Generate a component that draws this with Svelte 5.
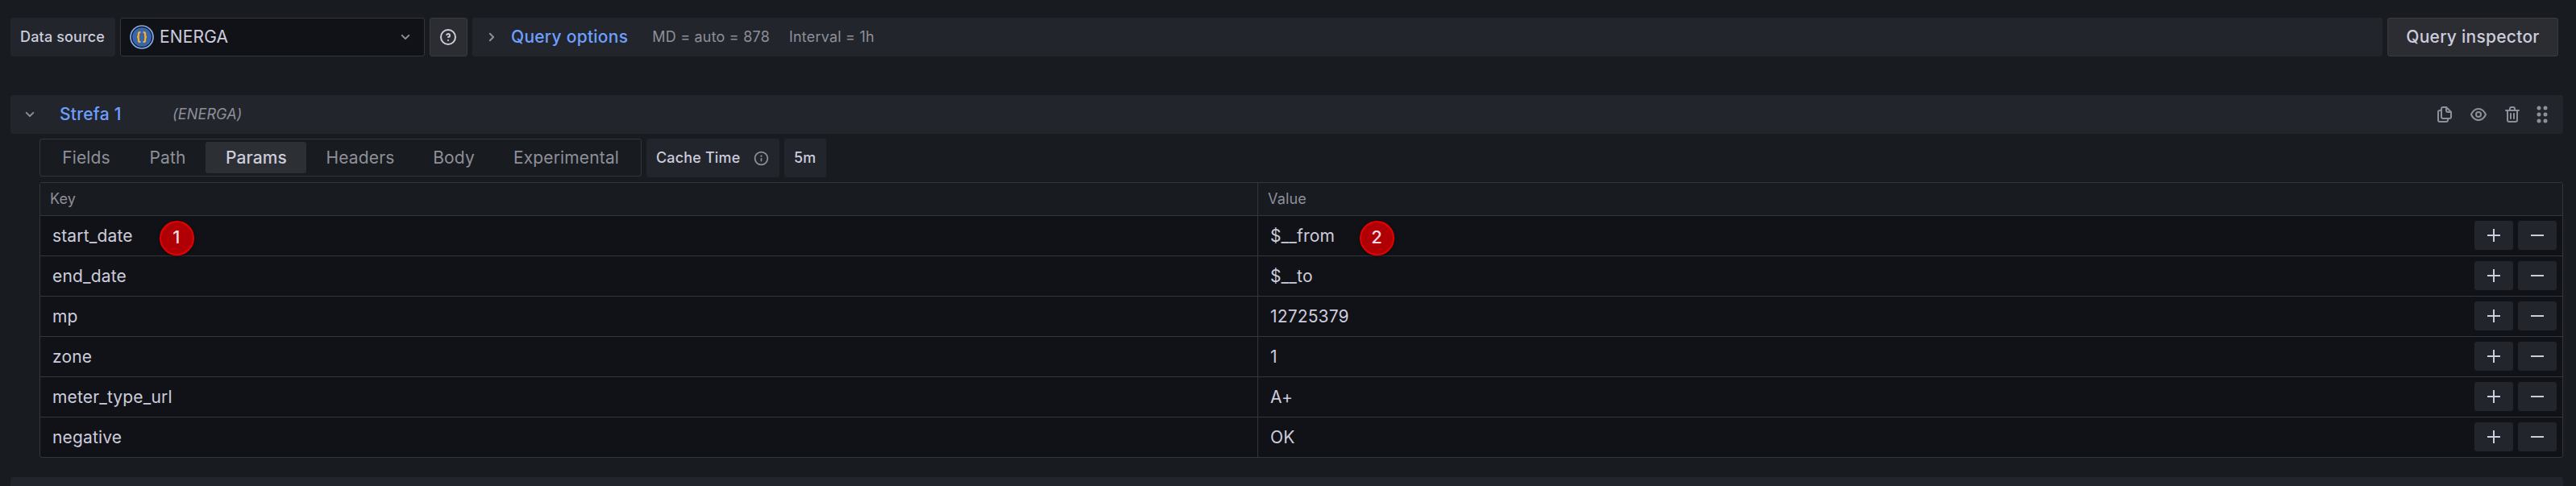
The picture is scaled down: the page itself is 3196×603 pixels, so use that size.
<script>
  const tabs = ['Fields', 'Path', 'Params', 'Headers', 'Body', 'Experimental'];
  const rows = [
    { key: 'start_date', value: '$__from', badge: 1 },
    { key: 'end_date', value: '$__to' },
    { key: 'mp', value: '12725379' },
    { key: 'zone', value: '1' },
    { key: 'meter_type_url', value: 'A+' },
    { key: 'negative', value: 'OK' }
  ];
  const icons = {
    down: 'M17,9.17a1,1,0,0,0-1.41,0L12,12.71,8.46,9.17a1,1,0,0,0-1.41,0,1,1,0,0,0,0,1.42l4.24,4.24a1,1,0,0,0,1.42,0L17,10.59A1,1,0,0,0,17,9.17Z',
    right: 'M14.83,11.29,10.59,7.05a1,1,0,0,0-1.42,0,1,1,0,0,0,0,1.41L12.71,12,9.17,15.54a1,1,0,0,0,0,1.41,1,1,0,0,0,.71.29,1,1,0,0,0,.71-.29l4.24-4.24A1,1,0,0,0,14.83,11.29Z',
    help: 'M11.29,15.29a1.58,1.58,0,0,0-.12.15.76.76,0,0,0-.09.18.64.64,0,0,0-.06.18,1.36,1.36,0,0,0,0,.2.84.84,0,0,0,.08.38.9.9,0,0,0,.54.54.94.94,0,0,0,.76,0,.9.9,0,0,0,.54-.54A1,1,0,0,0,13,16a1,1,0,0,0-.29-.71A1,1,0,0,0,11.29,15.29ZM12,2A10,10,0,1,0,22,12,10,10,0,0,0,12,2Zm0,18a8,8,0,1,1,8-8A8,8,0,0,1,12,20ZM12,7A3,3,0,0,0,9.4,8.5a1,1,0,1,0,1.73,1A1,1,0,0,1,12,9a1,1,0,0,1,0,2,1,1,0,1,0,0,2,3,3,0,0,0,0-6Z',
    info: 'M12,2A10,10,0,1,0,22,12,10.01114,10.01114,0,0,0,12,2Zm0,18a8,8,0,1,1,8-8A8.00917,8.00917,0,0,1,12,20Zm0-8.5a1,1,0,0,0-1,1v3a1,1,0,0,0,2,0v-3A1,1,0,0,0,12,11.5Zm0-4a1.25,1.25,0,1,0,1.25,1.25A1.25,1.25,0,0,0,12,7.5Z',
    copy: 'M21,8.94a1.31,1.31,0,0,0-.06-.27l0-.09a1.07,1.07,0,0,0-.19-.28h0l-6-6h0a1.07,1.07,0,0,0-.28-.19.32.32,0,0,0-.09,0A.88.88,0,0,0,14.05,2H10A3,3,0,0,0,7,5V6H6A3,3,0,0,0,3,9V19a3,3,0,0,0,3,3h8a3,3,0,0,0,3-3V18h1a3,3,0,0,0,3-3V9S21,9,21,8.94ZM15,5.41,17.59,8H16a1,1,0,0,1-1-1ZM15,19a1,1,0,0,1-1,1H6a1,1,0,0,1-1-1V9A1,1,0,0,1,6,8H7v7a3,3,0,0,0,3,3h5Zm4-4a1,1,0,0,1-1,1H10a1,1,0,0,1-1-1V5a1,1,0,0,1,1-1h3V7a3,3,0,0,0,3,3h3Z',
    eye: 'M21.92,11.6C19.9,6.91,16.1,4,12,4S4.1,6.91,2.08,11.6a1,1,0,0,0,0,.8C4.1,17.09,7.9,20,12,20s7.9-2.91,9.92-7.6A1,1,0,0,0,21.92,11.6ZM12,18c-3.17,0-6.17-2.29-7.9-6C5.83,8.29,8.83,6,12,6s6.17,2.29,7.9,6C18.17,15.71,15.17,18,12,18ZM12,8a4,4,0,1,0,4,4A4,4,0,0,0,12,8Zm0,6a2,2,0,1,1,2-2A2,2,0,0,1,12,14Z',
    trash: 'M10,18a1,1,0,0,0,1-1V11a1,1,0,0,0-2,0v6A1,1,0,0,0,10,18ZM20,6H16V5a3,3,0,0,0-3-3H11A3,3,0,0,0,8,5V6H4A1,1,0,0,0,4,8H5V19a3,3,0,0,0,3,3h8a3,3,0,0,0,3-3V8h1a1,1,0,0,0,0-2ZM10,5a1,1,0,0,1,1-1h2a1,1,0,0,1,1,1V6H10Zm7,14a1,1,0,0,1-1,1H8a1,1,0,0,1-1-1V8H17Zm-3-1a1,1,0,0,0,1-1V11a1,1,0,0,0-2,0v6A1,1,0,0,0,14,18Z'
  };
</script>

{#snippet icon(name, size)}
  <svg width={size} height={size} viewBox="0 0 24 24" fill="currentColor"><path d={icons[name]} /></svg>
{/snippet}

<div class="editor">
  <div class="toolbar">
    <div class="label ds">Data source</div>
    <div class="select">
      <svg class="logo" width="30" height="30" viewBox="0 0 30 30" fill="none">
        <circle cx="15" cy="15" r="14" stroke="#82aef0" stroke-width="1.7" />
        <circle cx="15" cy="15" r="12" fill="#3865ab" />
        <g stroke="#fbb021" stroke-width="2.2">
          <path d="M13.4 9.1h-.8q-1.7 0-1.7 1.7v2.1q0 2.1-1.9 2.1 1.9 0 1.9 2.1v2.1q0 1.7 1.7 1.7h.8" />
          <path d="M16.6 9.1h.8q1.7 0 1.7 1.7v2.1q0 2.1 1.9 2.1-1.9 0-1.9 2.1v2.1q0 1.7-1.7 1.7h-.8" />
        </g>
      </svg>
      <span>ENERGA</span>
      <i class="muted">{@render icon('down', 24)}</i>
    </div>
    <div class="help">{@render icon('help', 24)}</div>
    <div class="options">
      <i class="muted">{@render icon('right', 24)}</i>
      <span class="link">Query options</span>
      <span class="small md">MD = auto = 878</span>
      <span class="small">Interval = 1h</span>
    </div>
    <div class="inspector">Query inspector</div>
  </div>

  <div class="query-head">
    <i class="muted">{@render icon('down', 24)}</i>
    <span class="link name">Strefa 1</span>
    <em>(ENERGA)</em>
    <div class="actions">
      {@render icon('copy', 24)}
      {@render icon('eye', 24)}
      {@render icon('trash', 24)}
      <svg width="24" height="24" viewBox="0 0 24 24" fill="currentColor">
        {#each [4, 12, 20] as y}
          <circle cx="8" cy={y} r="2.5" /><circle cx="16" cy={y} r="2.5" />
        {/each}
      </svg>
    </div>
  </div>

  <div class="body">
    <div class="controls">
      <div class="tabs">
        {#each tabs as tab}
          <div class="tab" class:active={tab === 'Params'}>{tab}</div>
        {/each}
      </div>
      <div class="label cache">Cache Time <i class="muted">{@render icon('info', 21)}</i></div>
      <div class="label ttl">5m</div>
    </div>

    <div class="table">
      <div class="row header"><div class="cell">Key</div><div class="cell">Value</div></div>
      {#each rows as row}
        <div class="row">
          <div class="cell">{row.key}{#if row.badge}<b class="badge one">1</b>{/if}</div>
          <div class="cell">
            {row.value}{#if row.badge}<b class="badge two">2</b>{/if}
            <div class="buttons">
              <div class="btn"><svg width="16" height="16" stroke="#ccccdc" stroke-width="2"><path d="M8 0v16M0 8h16" /></svg></div>
              <div class="btn"><svg width="16" height="16" stroke="#ccccdc" stroke-width="2"><path d="M0 8h16" /></svg></div>
            </div>
          </div>
        </div>
      {/each}
    </div>
  </div>
  <div class="next"></div>
</div>

<style>
  :global(body) { background: #181b1f; }
  .editor {
    box-sizing: border-box; height: 603px; overflow: hidden; padding: 22px 16px 0 13px;
    font: 400 21px/32px Inter, sans-serif; letter-spacing: 0.15px; color: #ccccdc; background: #181b1f;
  }
  .editor * { box-sizing: border-box; }
  svg { display: block; flex: none; }
  i { display: flex; }
  .muted { color: #8e8f9a; }
  .link { color: #6e9fff; font-weight: 500; letter-spacing: 0.25px; }
  .toolbar { display: flex; gap: 6px; height: 48px; padding-right: 6px; }
  .toolbar > div, .controls > div, .query-head { display: flex; align-items: center; border-radius: 3px; white-space: nowrap; flex: none; }
  .label { height: 48px; padding: 0 12px; background: #22252b; font-size: 18px; font-weight: 500; }
  .ds { width: 130px; }
  .toolbar .select { width: 378px; padding: 0 11px; background: #111217; border: 1px solid #35363c; }
  .select span { flex: 1; margin-left: 7px; }
  .toolbar .help { width: 47px; padding-left: 10px; background: #2c2d32; border: 1px solid #3a3b41; }
  .toolbar .options { flex: 1; background: #22252b; padding-left: 12px; }
  .options .link { margin-left: 12px; }
  .small { font-size: 18px; color: #8e8f9a; margin-left: 24px; letter-spacing: 0.2px; }
  .small.md { margin-left: 30px; }
  .toolbar .inspector { width: 212px; justify-content: center; background: #2c2d32; border: 1px solid #3a3b41; font-weight: 500; letter-spacing: 0.25px; }
  .query-head { height: 48px; margin-top: 48px; background: #22252b; padding: 0 14px 0 12px; }
  .name { margin-left: 25px; width: 77px; white-space: nowrap; }
  em { margin-left: 63px; font-size: 18px; color: #8e8f9a; }
  .actions { margin-left: auto; display: flex; gap: 18px; color: #8e8f9a; }
  .actions svg:last-child { margin-left: -5px; }
  .body { padding: 6px 0 0 36px; }
  .controls { display: flex; gap: 6px; height: 48px; }
  .controls .tabs { display: grid; grid-template-columns: 107px 95px 125px 133px 99px 1fr; width: 747px; height: 47px; border: 1px solid #35363c; padding: 0 3px; }
  .tab { height: 39px; line-height: 39px; text-align: center; padding-left: 1px; color: #8e8f9a; border-radius: 3px; }
  .tab.active { background: #2c2f34; color: #ccccdc; font-weight: 500; }
  .cache { width: 165px; justify-content: space-between; }
  .ttl { width: 52px; }
  .table { margin-top: 6px; border: 1px solid #35363c; border-radius: 3px; background: #111217; overflow: hidden; }
  .row { display: grid; grid-template-columns: 1510px 1fr; height: 50px; border-top: 1px solid #35363c; }
  .row.header { height: 40px; border: 0; background: #181b1f; color: #8e8f9a; font-size: 18px; }
  .cell { position: relative; display: flex; align-items: center; padding: 0 7px 0 15px; white-space: nowrap; }
  .cell + .cell { border-left: 1px solid #35363c; }
  .header .cell { padding-left: 12px; }
  .buttons { display: flex; gap: 6px; margin-left: auto; padding-bottom: 1px; }
  .btn { width: 48px; height: 36px; background: #22252b; border-radius: 3px; display: grid; place-items: center; }
  .badge {
    position: absolute; top: 6px; width: 43px; height: 43px; padding-right: 1px; border: 2px solid #e60000; border-radius: 50%;
    background: #b00005; color: #f3dce0; font: 500 22px/37px Inter, sans-serif; text-align: center;
    box-shadow: 0 1px 4px #0008; z-index: 1;
  }
  .one { left: 148px; }
  .two { left: 126px; }
  .next { height: 20px; margin-top: 24px; background: #22252b; border-radius: 3px; }
</style>
